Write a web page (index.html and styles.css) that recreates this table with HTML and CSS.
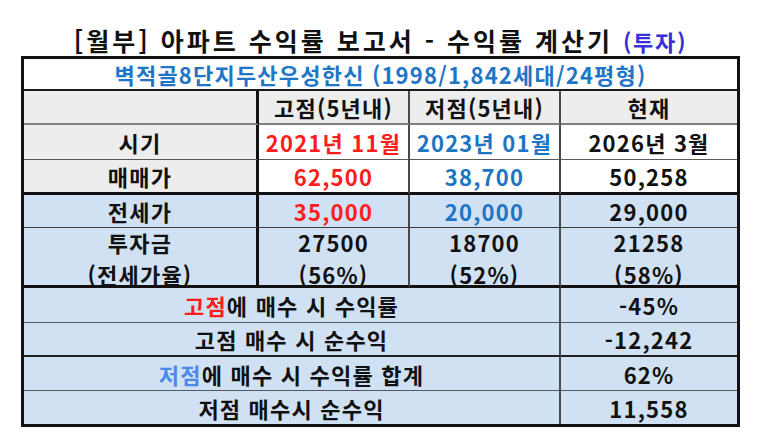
FILE: index.html
```html
<!DOCTYPE html>
<html lang="ko">
<head>
<meta charset="utf-8">
<link rel="stylesheet" href="styles.css">
</head>
<body>
<h1 class="title">[월부] 아파트 수익률 보고서 - 수익률 계산기 <span class="invest">(투자)</span></h1>
<div class="sheet">
  <div class="cell span4 name r1">벽적골8단지두산우성한신 (1998/1,842세대/24평형)</div>

  <div class="cell c1 r2 grey"></div>
  <div class="cell c2 r2 grey">고점(5년내)</div>
  <div class="cell c3 r2 grey">저점(5년내)</div>
  <div class="cell c4 r2 grey">현재</div>

  <div class="cell c1 r3 grey">시기</div>
  <div class="cell c2 r3 red">2021년 11월</div>
  <div class="cell c3 r3 blue">2023년 01월</div>
  <div class="cell c4 r3">2026년 3월</div>

  <div class="cell c1 r4 grey">매매가</div>
  <div class="cell c2 r4 red">62,500</div>
  <div class="cell c3 r4 blue">38,700</div>
  <div class="cell c4 r4">50,258</div>

  <div class="cell c1 r5 sky">전세가</div>
  <div class="cell c2 r5 sky red">35,000</div>
  <div class="cell c3 r5 sky blue">20,000</div>
  <div class="cell c4 r5 sky">29,000</div>

  <div class="cell c1 r6 sky two"><div class="lines"><span>투자금</span><span>(전세가율)</span></div></div>
  <div class="cell c2 r6 sky two"><div class="lines"><span>27500</span><span>(56%)</span></div></div>
  <div class="cell c3 r6 sky two"><div class="lines"><span>18700</span><span>(52%)</span></div></div>
  <div class="cell c4 r6 sky two"><div class="lines"><span>21258</span><span>(58%)</span></div></div>

  <div class="cell span3 r7 sky"><span class="red">고점</span>에 매수 시 수익률</div>
  <div class="cell c4 r7 sky">-45%</div>

  <div class="cell span3 r8 sky">고점 매수 시 순수익</div>
  <div class="cell c4 r8 sky">-12,242</div>

  <div class="cell span3 r9 sky"><span class="lightblue">저점</span>에 매수 시 수익률 합계</div>
  <div class="cell c4 r9 sky">62%</div>

  <div class="cell span3 r10 sky">저점 매수시 순수익</div>
  <div class="cell c4 r10 sky">11,558</div>
</div>
</body>
</html>
```

FILE: styles.css
```css
* { box-sizing: border-box; }
html, body { margin: 0; padding: 0; background: #ffffff; }
body {
  width: 761px;
  height: 443px;
  overflow: hidden;
  font-family: "Noto Sans CJK KR", "Noto Sans", sans-serif;
  font-weight: 700;
  color: #111111;
}
.title {
  margin: 0;
  padding-top: 25px;
  height: 56px;
  font-size: 25px;
  line-height: 30px;
  font-weight: 700;
  letter-spacing: 3px;
  text-align: center;
  color: #111111;
}
.invest {
  color: #3a2fd8;
  font-size: 22px;
  letter-spacing: 1.8px;
}
.sheet {
  margin-left: 21px;
  width: 719px;
  border: 3px solid #111111;
  display: grid;
  grid-template-columns: 235px 151px 151px 176px;
  grid-template-rows: 32px 34px 35px 35px 33px 60px 35px 34px 34px 33px;
  font-size: 22px;
  letter-spacing: 1.2px;
}
.cell {
  display: flex;
  align-items: center;
  justify-content: center;
  line-height: 26px;
  white-space: nowrap;
  background: #ffffff;
  border-bottom: 1px solid #555555;
}
.c1 { border-right: 3px solid #111111; }
.c2, .c3 { border-right: 2px solid #4a4a4a; }
.span4 { grid-column: 1 / span 4; }
.span3 { grid-column: 1 / span 3; border-right: 2px solid #4a4a4a; }
.grey { background: #ededed; }
.sky { background: #cfe1f3; }
.name { color: #1f76c6; }
.red { color: #ff1c1c; }
.blue { color: #1c74c4; }
.lightblue { color: #4a8ae6; }
.r1 { border-bottom: 2px solid #1a1a1a; }
.r2 { border-bottom: 2px solid #7f7f7f; }
.r3 { border-bottom: 1px solid #595959; }
.r4 { border-bottom: 3px solid #111111; }
.r5 { border-bottom: 1px solid #3a3a3a; }
.r6 { border-bottom: 3px solid #111111; }
.r7 { border-bottom: 1px solid #4f5b66; }
.r8 { border-bottom: 2px solid #222222; }
.r9 { border-bottom: 1px solid #4f5b66; }
.r10 { border-bottom: 0; }
.two { align-items: flex-start; padding-top: 3px; }
.lines {
  display: flex;
  flex-direction: column;
  align-items: center;
  gap: 10px;
  line-height: 22px;
}
```
